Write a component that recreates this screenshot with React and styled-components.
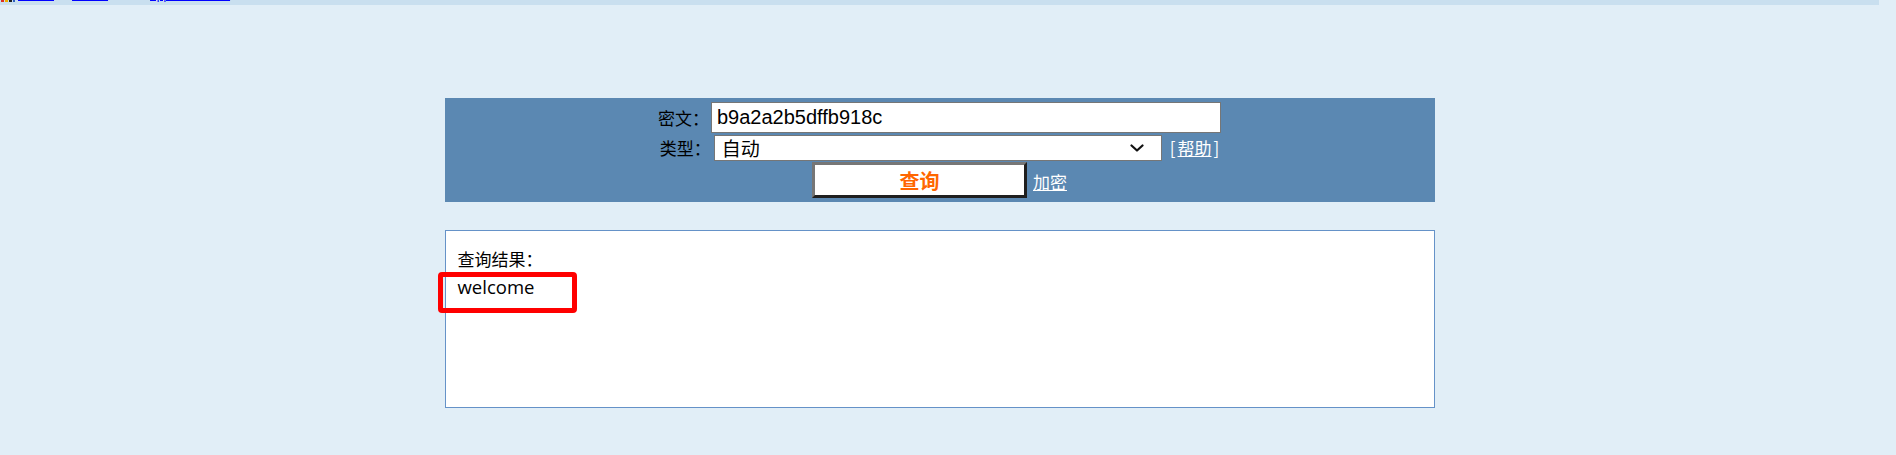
import React from 'react';
import styled, { createGlobalStyle } from 'styled-components';

const GlobalStyle = createGlobalStyle`
    body {
        margin: 0;
        background: #e1eef7;
        font-family: 'Liberation Sans', 'Noto Sans CJK SC', sans-serif;
        color: #000;
    }
`;

const Page = styled.div`
    padding-right: 17px;
`;

const TopBar = styled.div`
    height: 5px;
    overflow: hidden;
    background: #c9dfef;
`;

const NavRow = styled.div`
    display: flex;
    align-items: flex-end;
    height: 14px;
    margin-top: -12px;
`;

const NavLink = styled.a`
    margin-left: ${(p) => p.$gap || 0}px;
    font-size: 12px;
    line-height: 14px;
    color: #0000ff;
    text-decoration: underline;
    white-space: nowrap;
`;

const Panel = styled.div`
    width: 990px;
    box-sizing: border-box;
    margin: 93px auto 0;
    padding: 4px 0;
    background: #5b88b2;
    display: flex;
    flex-direction: column;
    align-items: center;
`;

const FormRow = styled.div`
    display: flex;
    align-items: ${(p) => p.$align || 'center'};
    margin-top: ${(p) => p.$top || 0}px;
`;

const Label = styled.span`
    font-family: 'Noto Sans CJK SC', sans-serif;
    font-size: 17px;
    line-height: 20px;
    margin-right: ${(p) => p.$gap || 2}px;
`;

const TextInput = styled.input`
    box-sizing: border-box;
    width: 510px;
    height: 31px;
    padding: 0 5px;
    border: 1px solid #767676;
    border-radius: 0;
    background: #fff;
    font-family: 'Liberation Sans', sans-serif;
    font-size: 20px;
    color: #000;
    outline: none;
`;

const SelectWrap = styled.div`
    position: relative;
    width: 448px;
    height: 26px;

    svg {
        position: absolute;
        right: 18px;
        top: 9px;
        pointer-events: none;
    }
`;

const TypeSelect = styled.select`
    appearance: none;
    box-sizing: border-box;
    width: 100%;
    height: 100%;
    padding: 0 0 0 7px;
    border: 1px solid #767676;
    border-radius: 0;
    background-color: #fff;
    font-family: 'Noto Sans CJK SC', sans-serif;
    font-size: 19px;
    line-height: 24px;
    color: #000;
    outline: none;
`;

const HelpText = styled.span`
    margin-left: 8px;
    font-family: 'Noto Sans CJK SC', sans-serif;
    font-size: 17px;
    line-height: 20px;
    color: #fff;
`;

const LightLink = styled.a`
    color: #fff;
    text-decoration: underline;
    font-family: 'Noto Sans CJK SC', sans-serif;
    font-size: 17px;
    margin: 0 ${(p) => p.$right || 0}px 0 ${(p) => p.$gap || 0}px;
`;

const QueryButton = styled.button`
    box-sizing: border-box;
    width: 215px;
    height: 36px;
    padding: 0;
    background: #fff;
    border-style: solid;
    border-width: 3px;
    border-color: #767676 #1f1f1f #1f1f1f #767676;
    font-family: 'Noto Sans CJK SC', sans-serif;
    font-size: 20px;
    font-weight: bold;
    color: #ff6600;
    cursor: pointer;
`;

const ResultBox = styled.div`
    position: relative;
    width: 990px;
    height: 178px;
    box-sizing: border-box;
    margin: 28px auto 0;
    padding: 14px 12px;
    background: #fff;
    border: 1px solid #6592c8;
    line-height: 28px;
`;

const ResultTitle = styled.div`
    font-family: 'Noto Sans CJK SC', sans-serif;
    font-size: 17px;
`;

const ResultValue = styled.div`
    font-family: 'Open Sans', sans-serif;
    font-size: 18.5px;
`;

const Highlight = styled.div`
    position: absolute;
    left: -8px;
    top: 41px;
    width: 139px;
    height: 41px;
    box-sizing: border-box;
    border: 5px solid #ff0000;
    border-radius: 4px;
    pointer-events: none;
`;

function SiteIcon() {
    return (
        <svg width="16" height="16" viewBox="0 0 16 16">
            <rect x="0" y="0" width="16" height="16" fill="#c9dfef" />
            <rect x="1" y="2" width="3" height="14" fill="#e03020" />
            <rect x="5" y="4" width="3" height="12" fill="#f0b000" />
            <rect x="9" y="3" width="3" height="13" fill="#202020" />
            <rect x="13" y="6" width="2" height="10" fill="#3060c0" />
        </svg>
    );
}

function Chevron() {
    return (
        <svg width="14" height="8" viewBox="0 0 14 8">
            <path
                d="M1.5 1.5 L7 6.5 L12.5 1.5"
                fill="none"
                stroke="#111"
                strokeWidth="2.2"
                strokeLinecap="round"
                strokeLinejoin="round"
            />
        </svg>
    );
}

export default function App() {
    return (
        <Page>
            <GlobalStyle />
            <TopBar>
                <NavRow>
                    <SiteIcon />
                    <NavLink $gap={2} href="#">网站首</NavLink>
                    <NavLink $gap={18} href="#">用户登</NavLink>
                    <NavLink $gap={42} href="#">app接口文档说</NavLink>
                </NavRow>
            </TopBar>

            <Panel>
                <FormRow>
                    <Label>密文：</Label>
                    <TextInput defaultValue="b9a2a2b5dffb918c" />
                </FormRow>
                <FormRow $top={2}>
                    <Label $gap={3}>类型：</Label>
                    <SelectWrap>
                        <TypeSelect defaultValue="auto">
                            <option value="auto">自动</option>
                            <option value="md5">md5</option>
                            <option value="sha1">sha1</option>
                        </TypeSelect>
                        <Chevron />
                    </SelectWrap>
                    <HelpText>
                        [
                        <LightLink $gap={2} $right={2} href="#">
                            帮助
                        </LightLink>
                        ]
                    </HelpText>
                </FormRow>
                <FormRow $top={1} $align="baseline">
                    <QueryButton type="button">查询</QueryButton>
                    <LightLink $gap={6} href="#">
                        加密
                    </LightLink>
                </FormRow>
            </Panel>

            <ResultBox>
                <ResultTitle>查询结果：</ResultTitle>
                <ResultValue>welcome</ResultValue>
                <Highlight />
            </ResultBox>
        </Page>
    );
}
